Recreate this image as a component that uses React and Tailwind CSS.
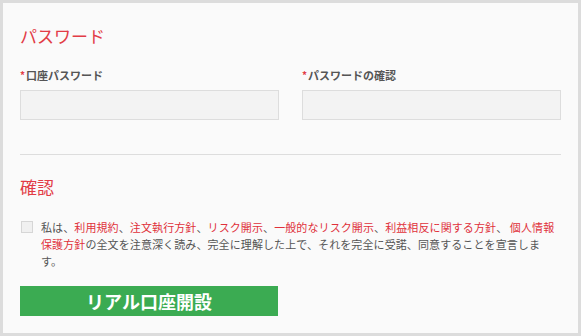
import React from 'react';

const FONT = { fontFamily: '"Noto Sans CJK JP", "Noto Sans", sans-serif' };

const Label = ({ children }) => (
  <div className="text-[11px] leading-[16px] font-bold text-[#555555] flex items-center">
    <span className="text-[#e23c46] text-[10px] mr-[1px]">*</span>
    {children}
  </div>
);

const Field = ({ label }) => (
  <div className="flex flex-col">
    <Label>{label}</Label>
    <input
      type="password"
      className="mt-[7px] h-[30px] w-full bg-[#f3f3f3] border border-[#dddddd] outline-none"
    />
  </div>
);

const Link = ({ children }) => <span className="text-[#e0313b]">{children}</span>;

export default function App() {
  return (
    <div className="w-[581px] h-[336px] bg-[#dcdcdc] p-[3px]" style={FONT}>
      <div className="h-[330px] bg-[#fafafa] px-[17px] pt-[21px]">
        <h2 className="text-[17px] leading-[24px] text-[#e23c46]">パスワード</h2>

        <div className="mt-[19px] grid grid-cols-2 gap-x-[23px]">
          <Field label="口座パスワード" />
          <Field label="パスワードの確認" />
        </div>

        <div className="mt-[34px] h-px bg-[#dddddd]" />

        <h2 className="mt-[20px] text-[17px] leading-[24px] text-[#e23c46]">確認</h2>

        <div className="mt-[20px] flex items-start">
          <span className="mt-[2px] ml-[1px] w-[12px] h-[12px] shrink-0 border border-[#d6d6d6] bg-[#f0f0f0]" />
          <p className="ml-[8px] w-[520px] text-[11px] leading-[17px] tracking-[0.1px] text-[#555555]">
            私は、<Link>利用規約</Link>、<Link>注文執行方針</Link>、<Link>リスク開示</Link>、<Link>一般的なリスク開示</Link>、<Link>利益相反に関する方針</Link>、 <Link>個人情報保護方針</Link>の全文を注意深く読み、完全に理解した上で、それを完全に受諾、同意することを宣言します。
          </p>
        </div>

        <button className="mt-[16px] w-[258px] h-[30px] bg-[#3bab52] text-white font-bold text-[18px] leading-[30px] flex items-center justify-center">
          リアル口座開設
        </button>
      </div>
    </div>
  );
}
